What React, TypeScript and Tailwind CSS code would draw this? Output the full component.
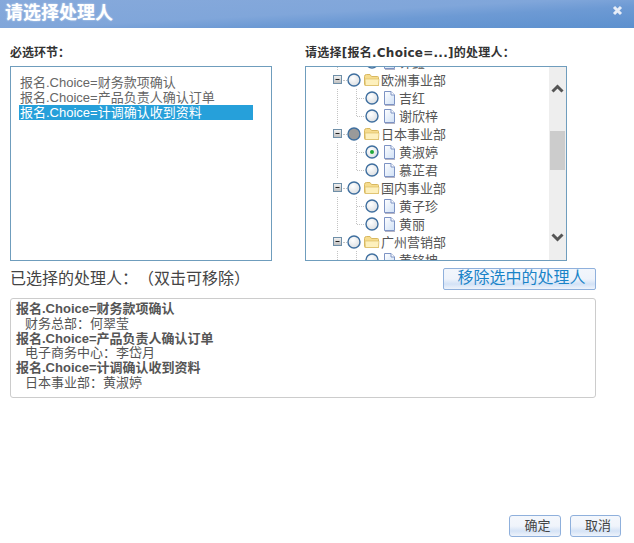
import React from 'react';

const cjk = '"Liberation Sans", "Noto Sans CJK SC", sans-serif';
const headingFont = '"DejaVu Sans", "Noto Sans CJK SC", sans-serif';

const Radio = ({ state }: { state?: 'partial' | 'checked' }) => (
  <svg width="14" height="14" viewBox="0 0 14 14" className="shrink-0">
    <defs>
      <radialGradient id="radioFill" cx="0.4" cy="0.35" r="0.8">
        <stop offset="0" stopColor="#ffffff" />
        <stop offset="1" stopColor="#d4d8dc" />
      </radialGradient>
    </defs>
    <circle cx="7" cy="7" r="6" fill={state === 'partial' ? '#9a9a9a' : 'url(#radioFill)'} stroke="#3f6f9f" strokeWidth="1.4" />
    {state === 'checked' && <circle cx="7" cy="7" r="2" fill="#21a83a" />}
  </svg>
);

const Expander = () => (
  <svg width="10" height="10" viewBox="0 0 10 10" className="shrink-0">
    <defs>
      <linearGradient id="expFill" x1="0" y1="0" x2="0" y2="1">
        <stop offset="0" stopColor="#f4f4f4" />
        <stop offset="1" stopColor="#bdbdbd" />
      </linearGradient>
    </defs>
    <rect x="0.5" y="0.5" width="8" height="8" fill="url(#expFill)" stroke="#6f8fa8" />
    <path d="M2.5 4.5h4" stroke="#222" strokeWidth="1" />
  </svg>
);

const Folder = () => (
  <svg width="16" height="14" viewBox="0 0 16 14" className="shrink-0">
    <path d="M0.5 3.5 Q0.5 1.5 2.5 1.5 H6 L7.5 3.5 H13.5 Q14.5 3.5 14.5 4.5 V12.5 H1.5 Q0.5 12.5 0.5 11.5 Z" fill="#f6dc8e" stroke="#d8b860" />
    <path d="M1 6 H15 L14.5 12.5 H1.5 Z" fill="#fdf0bd" stroke="#d8b860" strokeWidth="0.6" />
  </svg>
);

const FileIcon = () => (
  <svg width="13" height="15" viewBox="0 0 13 15" className="shrink-0">
    <defs>
      <linearGradient id="fileFill" x1="0" y1="0" x2="1" y2="1">
        <stop offset="0" stopColor="#ffffff" />
        <stop offset="1" stopColor="#cfe0f6" />
      </linearGradient>
    </defs>
    <path d="M1.5 0.5 H8 L11.5 4 V13.5 H1.5 Z" fill="url(#fileFill)" stroke="#7d93c4" />
    <path d="M8 0.5 V4 H11.5" fill="#ffffff" stroke="#7d93c4" />
    <path d="M2 14.5 H12" stroke="#b4b4c4" />
  </svg>
);

// 连接线：父节点的竖线 + 子节点的竖线和横线
const Connector = ({ last }: { last?: boolean }) => (
  <svg width="32" height="18" viewBox="0 0 32 18" className="shrink-0">
    <path d="M4.5 0V18" stroke="#c4c4c4" strokeDasharray="1 1" />
    <path d={last ? 'M23.5 0V9' : 'M23.5 0V18'} stroke="#c4c4c4" strokeDasharray="1 1" />
    <path d="M24 9.5H32" stroke="#c4c4c4" strokeDasharray="1 1" />
  </svg>
);

const Dept = ({ name, state }: { name: string; state?: 'partial' }) => (
  <div className="flex h-[18px] items-center">
    <Expander />
    <div className="w-[4px] border-t border-dotted border-[#c4c4c4]" />
    <Radio state={state} />
    <div className="w-[3px]" />
    <Folder />
    <span className="ml-[1px] mt-[2px] whitespace-nowrap text-[13px] text-[#555]">{name}</span>
  </div>
);

const Person = ({ name, last, checked }: { name: string; last?: boolean; checked?: boolean }) => (
  <div className="flex h-[18px] items-center">
    <Connector last={last} />
    <Radio state={checked ? 'checked' : undefined} />
    <div className="w-[4px]" />
    <FileIcon />
    <span className="ml-[3px] mt-[2px] whitespace-nowrap text-[13px] text-[#555]">{name}</span>
  </div>
);

const DialogButton = ({ label, wide }: { label: string; wide?: boolean }) => (
  <button className={`h-[22px] rounded-[3px] border border-[#8fb0dc] bg-[linear-gradient(#f4f7fc_0%,#f0f4fb_50%,#d5e3f6_75%,#eef3fb_100%)] pl-[5px] text-[13px] text-[#444] ${wide ? 'w-[52px]' : 'w-[51px]'}`}>
    {label}
  </button>
);

const App: React.FC = () => {
  return (
    <div className="flex h-[543px] w-[634px] flex-col overflow-hidden bg-white" style={{ fontFamily: cjk }}>
      {/* Title bar */}
      <div className="flex h-[28px] shrink-0 items-center justify-between bg-[linear-gradient(177deg,#86a9db_0%,#80a6da_48%,#6d9ad4_65%,#5c90ce_100%)] pl-[5px] pr-[11px]">
        <span className="pb-[3px] text-[18px] font-bold leading-none text-white [text-shadow:0_0_2px_rgba(255,255,255,0.6)]">请选择处理人</span>
        <svg width="11" height="11" viewBox="0 0 11 11" className="-mt-[8px]">
          <path d="M2 2L9 9M9 2L2 9" stroke="#e8eef8" strokeWidth="3" />
        </svg>
      </div>

      <div className="flex min-h-0 flex-1 flex-col px-[10px]">
        {/* Top panels */}
        <div className="mt-[17px] flex gap-[33px]">
          <div className="w-[262px]">
            <div className="h-[21px] text-[12px] font-bold leading-[17px] text-[#333]" style={{ fontFamily: headingFont }}>必选环节：</div>
            <div className="h-[195px] border border-[#6f9dbd] pl-[8px] pt-[8px] text-[13px] leading-[15px] text-[#666]">
              <div className="pl-[1px]">报名.Choice=财务款项确认</div>
              <div className="pl-[1px]">报名.Choice=产品负责人确认订单</div>
              <div className="w-[234px] bg-[#26a0da] pl-[1px] text-white">报名.Choice=计调确认收到资料</div>
            </div>
          </div>
          <div className="w-[262px]">
            <div className="h-[21px] whitespace-nowrap text-[12px] font-bold leading-[17px] tracking-[0.25px] text-[#333]" style={{ fontFamily: headingFont }}>请选择[报名.Choice=...]的处理人：</div>
            <div className="flex h-[195px] border border-[#6f9dbd]">
              <div className="min-w-0 flex-1 overflow-hidden pl-[27px]">
                <div className="-mt-[14px]">
                  <Person name="许鑫" last />
                  <Dept name="欧洲事业部" />
                  <Person name="吉红" />
                  <Person name="谢欣梓" last />
                  <Dept name="日本事业部" state="partial" />
                  <Person name="黄淑婷" checked />
                  <Person name="慕芷君" last />
                  <Dept name="国内事业部" />
                  <Person name="黄子珍" />
                  <Person name="黄丽" last />
                  <Dept name="广州营销部" />
                  <Person name="黄铭坤" />
                </div>
              </div>
              <div className="flex w-[17px] shrink-0 flex-col items-center bg-[#eeeeee]">
                <svg width="13" height="9" viewBox="0 0 13 9" className="mt-[17px] shrink-0">
                  <path d="M1.5 7.5L6.5 2.5L11.5 7.5" fill="none" stroke="#555" strokeWidth="3" />
                </svg>
                <div className="mt-[38px] h-[39px] w-[15px] shrink-0 bg-[#cccccc]" />
                <svg width="13" height="9" viewBox="0 0 13 9" className="mt-[63px] shrink-0">
                  <path d="M1.5 1.5L6.5 6.5L11.5 1.5" fill="none" stroke="#555" strokeWidth="3" />
                </svg>
              </div>
            </div>
          </div>
        </div>

        {/* Selected header */}
        <div className="mt-[7px] flex items-center justify-between pr-[28px]">
          <span className="text-[16px] leading-[22px] text-[#444] [text-spacing-trim:space-all]">已选择的处理人：（双击可移除）</span>
          <button className="h-[22px] w-[153px] rounded-[2px] border border-[#8fb0dc] bg-[linear-gradient(#f2f6fc_0%,#eef3fb_50%,#d3e2f6_75%,#eef3fb_100%)] pl-[4px] pb-[2px] text-[16px] leading-[18px] text-[#1a84c8]">
            移除选中的处理人
          </button>
        </div>

        {/* Selected list */}
        <div className="mt-[8px] h-[100px] w-[586px] rounded-[3px] border border-[#cccccc] pl-[5px] pt-[3px] text-[13px] leading-[14.8px] text-[#555]">
          <div className="font-bold">报名.Choice=财务款项确认</div>
          <div className="pl-[9px]">财务总部：何翠莹</div>
          <div className="font-bold">报名.Choice=产品负责人确认订单</div>
          <div className="pl-[9px]">电子商务中心：李岱月</div>
          <div className="font-bold">报名.Choice=计调确认收到资料</div>
          <div className="pl-[9px]">日本事业部：黄淑婷</div>
        </div>

        {/* Footer */}
        <div className="mt-auto flex justify-end gap-[9px] pb-[6px] pr-[3px]">
          <DialogButton label="确定" wide />
          <DialogButton label="取消" />
        </div>
      </div>
    </div>
  );
};

export default App;
